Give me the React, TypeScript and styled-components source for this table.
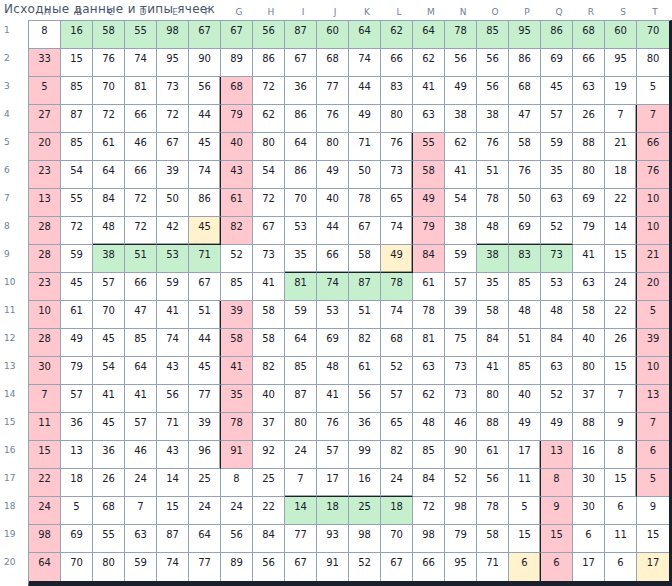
import React from 'react'
import styled, { createGlobalStyle } from 'styled-components'

type Kind = '.' | 'g' | 'p' | 'y'

const LINE = '#94a3b8'
const WALL = '#1a202c'

const FILL: Record<Kind, string> = {
  '.': '#ffffff',
  g: '#c6efce',
  p: '#ffc7ce',
  y: '#fff2cc',
}

const LETTERS = 'ABCDEFGHIJKLMNOPQRST'.split('')

const VALUES: number[][] = [
  [8, 16, 58, 55, 98, 67, 67, 56, 87, 60, 64, 62, 64, 78, 85, 95, 86, 68, 60, 70],
  [33, 15, 76, 74, 95, 90, 89, 86, 67, 68, 74, 66, 62, 56, 56, 86, 69, 66, 95, 80],
  [5, 85, 70, 81, 73, 56, 68, 72, 36, 77, 44, 83, 41, 49, 56, 68, 45, 63, 19, 5],
  [27, 87, 72, 66, 72, 44, 79, 62, 86, 76, 49, 80, 63, 38, 38, 47, 57, 26, 7, 7],
  [20, 85, 61, 46, 67, 45, 40, 80, 64, 80, 71, 76, 55, 62, 76, 58, 59, 88, 21, 66],
  [23, 54, 64, 66, 39, 74, 43, 54, 86, 49, 50, 73, 58, 41, 51, 76, 35, 80, 18, 76],
  [13, 55, 84, 72, 50, 86, 61, 72, 70, 40, 78, 65, 49, 54, 78, 50, 63, 69, 22, 10],
  [28, 72, 48, 72, 42, 45, 82, 67, 53, 44, 67, 74, 79, 38, 48, 69, 52, 79, 14, 10],
  [28, 59, 38, 51, 53, 71, 52, 73, 35, 66, 58, 49, 84, 59, 38, 83, 73, 41, 15, 21],
  [23, 45, 57, 66, 59, 67, 85, 41, 81, 74, 87, 78, 61, 57, 35, 85, 53, 63, 24, 20],
  [10, 61, 70, 47, 41, 51, 39, 58, 59, 53, 51, 74, 78, 39, 58, 48, 48, 58, 22, 5],
  [28, 49, 45, 85, 74, 44, 58, 58, 64, 69, 82, 68, 81, 75, 84, 51, 84, 40, 26, 39],
  [30, 79, 54, 64, 43, 45, 41, 82, 85, 48, 61, 52, 63, 73, 41, 85, 63, 80, 15, 10],
  [7, 57, 41, 41, 56, 77, 35, 40, 87, 41, 56, 57, 62, 73, 80, 40, 52, 37, 7, 13],
  [11, 36, 45, 57, 71, 39, 78, 37, 80, 76, 36, 65, 48, 46, 88, 49, 49, 88, 9, 7],
  [15, 13, 36, 46, 43, 96, 91, 92, 24, 57, 99, 82, 85, 90, 61, 17, 13, 16, 8, 6],
  [22, 18, 26, 24, 14, 25, 8, 25, 7, 17, 16, 24, 84, 52, 56, 11, 8, 30, 15, 5],
  [24, 5, 68, 7, 15, 24, 24, 22, 14, 18, 25, 18, 72, 98, 78, 5, 9, 30, 6, 9],
  [98, 69, 55, 63, 87, 64, 56, 84, 77, 93, 98, 70, 98, 79, 58, 15, 15, 6, 11, 15],
  [64, 70, 80, 59, 74, 77, 89, 56, 67, 91, 52, 67, 66, 95, 71, 6, 6, 17, 6, 17],
]

// one letter per cell: . plain, g green, p pink, y yellow
const KINDS: string[] = [
  '.ggggggggggggggggggg',
  'p...................',
  'p.....p.............',
  'p.....p............p',
  'p.....p.....p......p',
  'p.....p.....p......p',
  'p.....p.....p......p',
  'p....yp.....p......p',
  'p.gggg.....yp.ggg..p',
  'p.......gggg.......p',
  'p.....p............p',
  'p.....p............p',
  'p.....p............p',
  'p.....p............p',
  'p.....p............p',
  'p.....p.........p..p',
  'p...............p..p',
  'p.......gggg....p...',
  'p...............p...',
  'p..............yp..y',
]

// thick lines: [column, fromRow, toRow] on the right side of a column (1-based rows)
const RIGHT_WALLS: [number, number, number][] = [
  [5, 3, 8],
  [5, 11, 16],
  [11, 5, 9],
  [18, 4, 17],
  [15, 16, 20],
]

// [row, fromCol, toCol] on the bottom side of a row
const BOTTOM_WALLS: [number, number, number][] = [
  [8, 2, 5],
  [8, 14, 16],
  [9, 8, 11],
  [17, 8, 11],
]

const hasRightWall = (r: number, c: number) =>
  RIGHT_WALLS.some(([col, a, b]) => col === c && r >= a && r <= b)

const hasBottomWall = (r: number, c: number) =>
  BOTTOM_WALLS.some(([row, a, b]) => row === r && c >= a && c <= b)

const GlobalStyle = createGlobalStyle`
  html, body {
    margin: 0;
    padding: 0;
    overflow: hidden;
    background: #ffffff;
  }
  body {
    font-family: 'DejaVu Sans', 'Liberation Sans', sans-serif;
  }
`

const Page = styled.div`
  position: relative;
  width: 672px;
  height: 586px;
  overflow: hidden;
`

// the caption sits over the column letters, as in the source
const Title = styled.div`
  position: absolute;
  left: 4px;
  top: 2px;
  z-index: 1;
  font-size: 12px;
  letter-spacing: 0.3px;
  line-height: 14px;
  color: #4a5568;
  white-space: nowrap;
`

const HeaderRow = styled.div`
  display: flex;
  align-items: flex-end;
  height: 20px;
  padding-left: 31px;
  box-sizing: border-box;
`

const ColLetter = styled.div`
  width: 32px;
  padding-bottom: 3px;
  text-align: center;
  font-size: 9px;
  line-height: 10px;
  color: #718096;
`

const Body = styled.div`
  display: flex;
`

const RowLabels = styled.div`
  display: flex;
  flex-direction: column;
  width: 30px;
  padding-top: 1px;
`

const RowLabel = styled.div`
  height: 28px;
  box-sizing: border-box;
  padding: 4px 0 0 4px;
  font-size: 9px;
  line-height: 11px;
  color: #718096;
`

const Grid = styled.div`
  display: grid;
  grid-template-columns: repeat(20, 32px);
  grid-auto-rows: 28px;
  border-left: 1px solid ${LINE};
  border-top: 1px solid ${LINE};
  border-right: 3px solid ${WALL};
  border-bottom: 8px solid ${WALL};
`

const Cell = styled.div<{
  $kind: Kind
  $wallRight: boolean
  $wallBottom: boolean
  $lastCol: boolean
  $lastRow: boolean
}>`
  box-sizing: border-box;
  padding-top: 4px;
  background: ${(p) => FILL[p.$kind]};
  border-right: ${(p) =>
    p.$lastCol ? 'none' : `1px solid ${p.$wallRight ? WALL : LINE}`};
  border-bottom: ${(p) =>
    p.$lastRow ? 'none' : `1px solid ${p.$wallBottom ? WALL : LINE}`};
  box-shadow: ${(p) =>
    [
      p.$wallRight ? 'inset -1px 0 0 rgba(26, 32, 44, 0.4)' : '',
      p.$wallBottom ? 'inset 0 -1px 0 rgba(26, 32, 44, 0.4)' : '',
    ]
      .filter(Boolean)
      .join(', ') || 'none'};
  text-align: center;
  font-size: 10px;
  line-height: 12px;
  color: #1a202c;
`

export default function App() {
  return (
    <Page>
      <GlobalStyle />
      <Title>Исходные данные и типы ячеек</Title>
      <HeaderRow>
        {LETTERS.map((l) => (
          <ColLetter key={l}>{l}</ColLetter>
        ))}
      </HeaderRow>
      <Body>
        <RowLabels>
          {VALUES.map((_, r) => (
            <RowLabel key={r}>{r + 1}</RowLabel>
          ))}
        </RowLabels>
        <Grid>
          {VALUES.map((row, r) =>
            row.map((v, c) => (
              <Cell
                key={`${r}-${c}`}
                $kind={KINDS[r][c] as Kind}
                $wallRight={hasRightWall(r + 1, c)}
                $wallBottom={hasBottomWall(r + 1, c)}
                $lastCol={c === 19}
                $lastRow={r === 19}
              >
                {v}
              </Cell>
            ))
          )}
        </Grid>
      </Body>
    </Page>
  )
}
